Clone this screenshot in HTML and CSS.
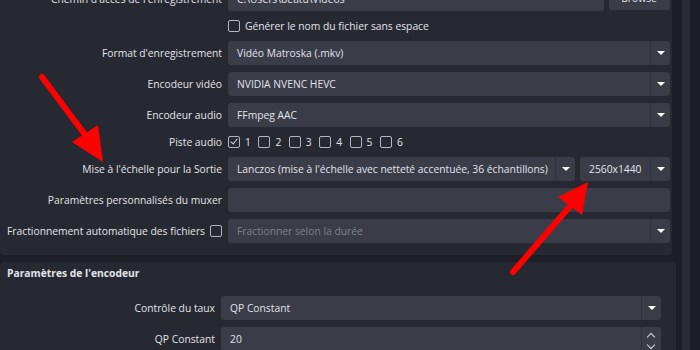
FILE: index.html
```html
<!DOCTYPE html>
<html lang="fr">
<head>
    <meta charset="UTF-8">
    <meta name="viewport" content="width=device-width, initial-scale=1.0">
    <title>Paramètres de sortie - Enregistrement</title>
    <link rel="stylesheet" href="styles.css">
</head>
<body>
    <div class="window">
        <div class="main">
            <section class="panel panel-output">
                <div class="form">
                    <div class="label">Chemin d'accès de l'enregistrement</div>
                    <div class="field-row">
                        <div class="field grow">C:\Users\beatu\Videos</div>
                        <div class="button">Browse</div>
                    </div>

                    <div class="label"></div>
                    <div class="checks">
                        <span class="check"><span class="box"></span>Générer le nom du fichier sans espace</span>
                    </div>

                    <div class="label">Format d'enregistrement</div>
                    <div class="field combo">Vidéo Matroska (.mkv)<span class="drop"></span></div>

                    <div class="label">Encodeur vidéo</div>
                    <div class="field combo">NVIDIA NVENC HEVC<span class="drop"></span></div>

                    <div class="label">Encodeur audio</div>
                    <div class="field combo">FFmpeg AAC<span class="drop"></span></div>

                    <div class="label">Piste audio</div>
                    <div class="checks tracks">
                        <span class="check"><span class="box checked"></span>1</span>
                        <span class="check"><span class="box"></span>2</span>
                        <span class="check"><span class="box"></span>3</span>
                        <span class="check"><span class="box"></span>4</span>
                        <span class="check"><span class="box"></span>5</span>
                        <span class="check"><span class="box"></span>6</span>
                    </div>

                    <div class="label">Mise à l'échelle pour la Sortie</div>
                    <div class="field-row">
                        <div class="field combo scale-filter">Lanczos (mise à l'échelle avec netteté accentuée, 36 échantillons)<span class="drop"></span></div>
                        <div class="field combo resolution">2560x1440<span class="drop"></span></div>
                    </div>

                    <div class="label">Paramètres personnalisés du muxer</div>
                    <div class="field"></div>

                    <div class="label">Fractionnement automatique des fichiers <span class="box"></span></div>
                    <div class="field combo placeholder">Fractionner selon la durée<span class="drop"></span></div>
                </div>
            </section>

            <section class="panel panel-encoder">
                <h2>Paramètres de l'encodeur</h2>
                <div class="form">
                    <div class="label">Contrôle du taux</div>
                    <div class="field combo">QP Constant<span class="drop"></span></div>

                    <div class="label">QP Constant</div>
                    <div class="field spin">20<span class="spin-btns"><span class="up"></span><span class="down"></span></span></div>
                </div>
            </section>
        </div>
        <div class="scrollbar"><div class="track"></div></div>
    </div>

    <svg class="annotations" width="700" height="350" viewBox="0 0 700 350">
        <line x1="42" y1="77" x2="86" y2="136" stroke="#ff0000" stroke-width="6" stroke-linecap="round"/>
        <polygon points="72,142 98,125 103,162" fill="#ff0000"/>
        <line x1="513" y1="272" x2="572" y2="204" stroke="#ff0000" stroke-width="6" stroke-linecap="round"/>
        <polygon points="558,197 582,215 588,182" fill="#ff0000"/>
    </svg>
</body>
</html>
```

FILE: styles.css
```css
body {
    margin: 0;
    background-color: #1e1f26;
    font-family: "Open Sans", "Noto Sans", sans-serif;
    font-size: 10.3px;
    color: #e2e3e8;
    overflow: hidden;
    height: 350px;
}
.window {
    display: flex;
    height: 350px;
}
.main {
    width: 676px;
    display: flex;
    flex-direction: column;
    gap: 7px;
}
.panel {
    background-color: #272932;
    border-radius: 0 0 4px 4px;
}
.panel-output {
    margin-top: -25px;
    margin-right: 4px;
    padding: 12px 5px 12px 0;
}
.panel-encoder {
    padding: 4px 15px 12px 0;
    border-radius: 4px;
    flex: 1;
}
.panel h2 {
    font-size: 10.3px;
    font-weight: 700;
    margin: 0 0 16px 7px;
    line-height: 14px;
}
.form {
    display: grid;
    grid-template-columns: 222px 1fr;
    column-gap: 6px;
    row-gap: 7px;
    align-items: center;
}
.panel-encoder .form {
    grid-template-columns: 215px 1fr;
}
.label {
    text-align: right;
    white-space: nowrap;
    display: flex;
    justify-content: flex-end;
    align-items: center;
    gap: 5px;
}
.field-row {
    display: flex;
    gap: 5px;
}
.field {
    position: relative;
    height: 24px;
    line-height: 24px;
    padding: 0 9px;
    background-color: #3a3c48;
    border-radius: 3px;
    white-space: nowrap;
    overflow: hidden;
}
.grow {
    flex: 1;
}
.button {
    width: 61px;
    height: 23px;
    line-height: 23px;
    text-align: center;
    background-color: #3a3c48;
    border-radius: 3px;
}
.combo {
    padding-right: 28px;
}
.drop, .spin-btns {
    position: absolute;
    right: 0;
    top: 0;
    bottom: 0;
    width: 19px;
    border-left: 1px solid #30323d;
}
.drop::after {
    content: "";
    position: absolute;
    left: 6px;
    top: 10px;
    border-left: 4px solid transparent;
    border-right: 4px solid transparent;
    border-top: 4px solid #ffffff;
}
.scale-filter {
    width: 310px;
}
.resolution {
    flex: 1;
    padding-left: 9px;
}
.placeholder {
    color: #7f818b;
}
.spin-btns span {
    position: absolute;
    left: 6px;
    width: 5px;
    height: 5px;
    border-left: 1.5px solid #d8d9de;
    border-top: 1.5px solid #d8d9de;
}
.spin-btns .up {
    top: 7px;
    transform: rotate(45deg);
}
.spin-btns .down {
    top: 15px;
    transform: rotate(225deg);
}
.checks {
    display: flex;
    gap: 6px;
    height: 16px;
    align-items: center;
}
.tracks {
    gap: 7.5px;
}
.check {
    display: flex;
    align-items: center;
    gap: 5px;
}
.box {
    display: inline-block;
    position: relative;
    width: 10px;
    height: 10px;
    border: 1px solid #b4b6bd;
    border-radius: 2px;
}
.box.checked::after {
    content: "";
    position: absolute;
    left: 3px;
    top: 0px;
    width: 3px;
    height: 6px;
    border-right: 1.5px solid #d8d9de;
    border-bottom: 1.5px solid #d8d9de;
    transform: rotate(40deg);
}
.scrollbar {
    flex: 1;
    display: flex;
    padding-left: 6px;
}
.track {
    width: 8px;
    background-color: #2a2c35;
}
.annotations {
    position: absolute;
    left: 0;
    top: 0;
}
```
